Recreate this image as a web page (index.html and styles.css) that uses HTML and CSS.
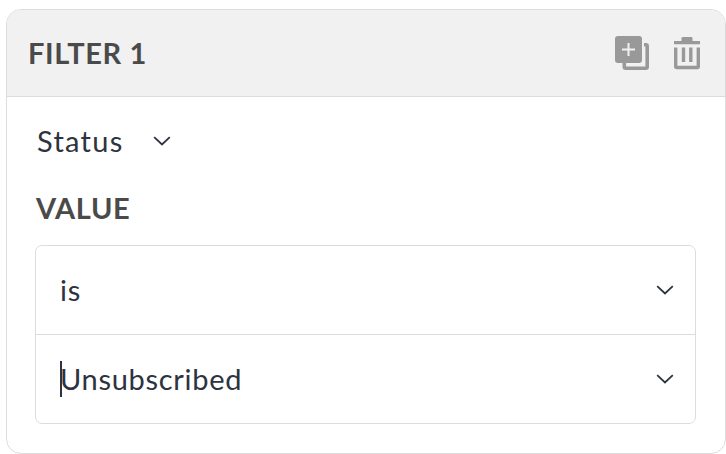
FILE: index.html
```html
<!DOCTYPE html>
<html lang="en">
<head>
  <meta charset="UTF-8" />
  <meta name="viewport" content="width=device-width, initial-scale=1.0"/>
  <title>Filter</title>
  <link rel="stylesheet" href="styles.css">
</head>
<body>
  <section class="filter-card">
    <header class="filter-header">
      <h2 class="filter-title">FILTER 1</h2>
      <div class="filter-actions">
        <button class="icon-btn" aria-label="Duplicate filter">
          <svg width="34" height="34" viewBox="0 0 34 34">
            <path d="M29 8.800h1.700a1.500 1.500 0 0 1 1.500 1.500v20.400a1.500 1.500 0 0 1-1.500 1.500H10.800a1.500 1.500 0 0 1-1.500-1.500v-4.200" fill="none" stroke="#999" stroke-width="3.600"/>
            <rect width="27" height="27" rx="3" fill="#999"/>
            <path d="M13.500 7v13M7 13.500h13" stroke="#f1f1f1" stroke-width="2"/>
          </svg>
        </button>
        <button class="icon-btn" aria-label="Delete filter">
          <svg width="26" height="34" viewBox="0 0 26 34">
            <path d="M0 5h7.500V2.200A1.200 1.200 0 0 1 8.700 1h8.600A1.200 1.200 0 0 1 18.500 2.200V5H26v3.200H0z" fill="#999"/>
            <path d="M1.700 11.500v19a1 1 0 0 0 1 1h20.600a1 1 0 0 0 1-1v-19M9.500 11.500V26M16.800 11.500V26" fill="none" stroke="#999" stroke-width="3.400"/>
          </svg>
        </button>
      </div>
    </header>

    <div class="filter-body">
      <div class="field-select">
        <span>Status</span>
        <svg class="chevron" width="18" height="10" viewBox="0 0 18 10"><path d="M1.200 1.200 9 8.500l7.800-7.300"/></svg>
      </div>

      <h3 class="value-label">VALUE</h3>
      <div class="value-group">
        <div class="value-row">
          <span>is</span>
          <svg class="chevron" width="18" height="10" viewBox="0 0 18 10"><path d="M1.200 1.200 9 8.500l7.800-7.300"/></svg>
        </div>
        <div class="value-row">
          <span class="editing">Unsubscribed</span>
          <svg class="chevron" width="18" height="10" viewBox="0 0 18 10"><path d="M1.200 1.200 9 8.500l7.800-7.300"/></svg>
        </div>
      </div>
    </div>
  </section>
</body>
</html>
```
FILE: styles.css
```css
* { margin: 0; padding: 0; box-sizing: border-box; }

body {
  font-family: Lato, "Open Sans", sans-serif;
  font-size: 29px;
  line-height: 36px;
  color: #2d333f;
  background: #fff;
  padding: 9px 0 0 6px;
}

.filter-card {
  width: 720px;
  height: 445px;
  border: 1px solid #dcdcdc;
  border-radius: 15px;
  overflow: hidden;
}

.filter-header {
  display: flex;
  justify-content: space-between;
  align-items: center;
  height: 87px;
  padding: 0 25px 0 21px;
  background: #f1f1f1;
  border-bottom: 1px solid #dcdcdc;
}

.filter-title,
.value-label {
  font-size: 29px;
  font-weight: bold;
  letter-spacing: 0.6px;
  color: #4a4a4a;
}

.filter-title {
  padding-bottom: 1px;
}

.filter-actions {
  display: flex;
  gap: 25px;
}

.icon-btn {
  border: none;
  background: none;
  cursor: pointer;
}

.icon-btn svg {
  display: block;
}

.filter-body {
  padding: 26px 29px 29px 28px;
}

.field-select {
  display: flex;
  align-items: center;
  gap: 29px;
  padding-left: 2px;
  letter-spacing: 1.3px;
}

.value-label {
  margin: 31px 0 19px;
  padding-left: 1px;
}

.chevron {
  fill: none;
  stroke: #2d333f;
  stroke-width: 1.8;
}

.value-group {
  border: 1px solid #dcdcdc;
  border-radius: 7px;
  letter-spacing: 0.7px;
}

.value-row {
  display: flex;
  justify-content: space-between;
  align-items: center;
  height: 88px;
  padding: 0 21px 0 24px;
}

.value-row + .value-row {
  height: 89px;
  border-top: 1px solid #dcdcdc;
}

/* text cursor in front of the value */
.editing {
  box-shadow: inset 2px 0 #2d333f;
}
```
